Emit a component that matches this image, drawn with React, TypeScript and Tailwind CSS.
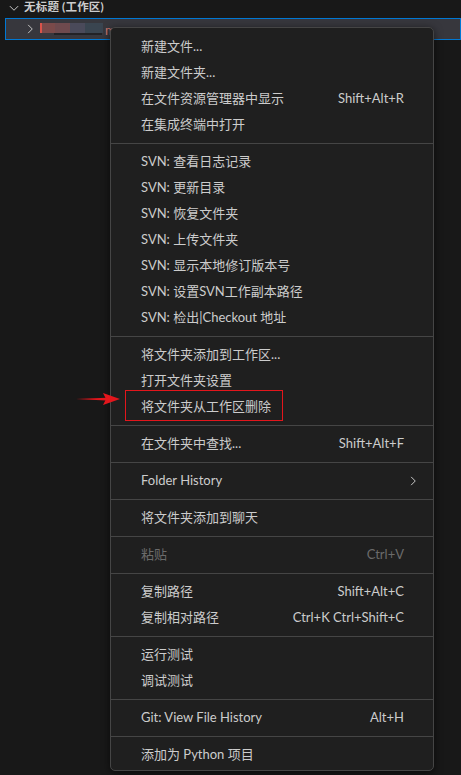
import React from "react";

type Item =
  | { kind: "sep" }
  | { kind: "item"; label: string; shortcut?: string; disabled?: boolean; submenu?: boolean; id?: string };

const items: Item[] = [
  { kind: "item", label: "新建文件..." },
  { kind: "item", label: "新建文件夹..." },
  { kind: "item", label: "在文件资源管理器中显示", shortcut: "Shift+Alt+R" },
  { kind: "item", label: "在集成终端中打开" },
  { kind: "sep" },
  { kind: "item", label: "SVN: 查看日志记录" },
  { kind: "item", label: "SVN: 更新目录" },
  { kind: "item", label: "SVN: 恢复文件夹" },
  { kind: "item", label: "SVN: 上传文件夹" },
  { kind: "item", label: "SVN: 显示本地修订版本号" },
  { kind: "item", label: "SVN: 设置SVN工作副本路径" },
  { kind: "item", label: "SVN: 检出|Checkout 地址" },
  { kind: "sep" },
  { kind: "item", label: "将文件夹添加到工作区..." },
  { kind: "item", label: "打开文件夹设置" },
  { kind: "item", label: "将文件夹从工作区删除", id: "remove" },
  { kind: "sep" },
  { kind: "item", label: "在文件夹中查找...", shortcut: "Shift+Alt+F" },
  { kind: "sep" },
  { kind: "item", label: "Folder History", submenu: true },
  { kind: "sep" },
  { kind: "item", label: "将文件夹添加到聊天" },
  { kind: "sep" },
  { kind: "item", label: "粘贴", shortcut: "Ctrl+V", disabled: true },
  { kind: "sep" },
  { kind: "item", label: "复制路径", shortcut: "Shift+Alt+C" },
  { kind: "item", label: "复制相对路径", shortcut: "Ctrl+K Ctrl+Shift+C" },
  { kind: "sep" },
  { kind: "item", label: "运行测试" },
  { kind: "item", label: "调试测试" },
  { kind: "sep" },
  { kind: "item", label: "Git: View File History", shortcut: "Alt+H" },
  { kind: "sep" },
  { kind: "item", label: "添加为 Python 项目" },
];

const font = {
  fontFamily: '"Segoe UI", Lato, "Noto Sans CJK SC", sans-serif',
};

export default function App() {
  return (
    <div
      className="relative w-[461px] h-[775px] overflow-hidden bg-[#181818] text-[#cccccc]"
      style={font}
    >
      {/* Pane header */}
      <div className="flex h-[18px] items-center pl-[8px] gap-[4px]">
        <svg width="12" height="12" viewBox="0 0 16 16" className="mt-[-3px]">
          <path d="M2.5 5.5 L8 11 L13.5 5.5" fill="none" stroke="#cccccc" strokeWidth="1.3" />
        </svg>
        <span className="text-[11.5px] font-bold leading-none mt-[-4px] tracking-[0.2px]">无标题 (工作区)</span>
      </div>

      {/* Selected row */}
      <div className="ml-[5px] flex h-[22px] items-center border border-[#0078d4] bg-[#37373d]">
        <svg width="12" height="12" viewBox="0 0 16 16" className="ml-[18px]">
          <path d="M5.5 2.5 L11 8 L5.5 13.5" fill="none" stroke="#c5c5c5" strokeWidth="1.3" />
        </svg>
        <div className="ml-[4px] flex h-[12px] flex-col">
          <div className="flex h-[10px]">
            <div className="w-[2px] bg-[#d9534a]" />
            <div className="w-[13px] bg-[#7a4a4a]" />
            <div className="w-[15px] bg-[#6e4a4e]" />
            <div className="w-[15px] bg-[#4a4a5a]" />
            <div className="w-[18px] bg-[#3a4550]" />
          </div>
          <div className="ml-[14px] h-[2px] w-[48px] bg-[#222226]" />
        </div>
        <span className="ml-[2px] text-[13px] leading-none text-[#d0776e] mt-[2px]">m</span>
      </div>

      {/* Context menu */}
      <div className="absolute left-[110px] top-[27px] w-[324px] rounded-[5px] border border-[#454545] bg-[#1f1f1f] pt-[6px] pb-[2px] shadow-[0_2px_8px_rgba(0,0,0,0.6)]">
        {items.map((it, i) =>
          it.kind === "sep" ? (
            <div key={i} className="my-[5px] h-px bg-[#454545]" />
          ) : (
            <div
              key={i}
              className={
                "flex h-[26px] items-center pl-[30px] pr-[29px] text-[13px] " +
                (it.disabled ? "text-[#6b6b6b]" : "text-[#cccccc]")
              }
            >
              <span className="flex-1 whitespace-nowrap">{it.label}</span>
              {it.shortcut && <span className="whitespace-nowrap">{it.shortcut}</span>}
              {it.submenu && (
                <svg width="12" height="12" viewBox="0 0 16 16" className="mr-[-15px]">
                  <path d="M5.5 2.5 L11 8 L5.5 13.5" fill="none" stroke="#cccccc" strokeWidth="1.3" />
                </svg>
              )}
            </div>
          )
        )}
      </div>

      {/* Red highlight box */}
      <div className="absolute left-[125px] top-[390px] h-[31px] w-[158px] border-[1.5px] border-[#e3161c]" />

      {/* Red arrow */}
      <svg className="absolute left-[74px] top-[390px]" width="50" height="18" viewBox="0 0 50 18">
        <path d="M2 9 L32 7.8 L32 10.6 Z" fill="#e3161c" />
        <path d="M29 3 L46 9 L29 15 L32 9 Z" fill="#e3161c" />
      </svg>
    </div>
  );
}
